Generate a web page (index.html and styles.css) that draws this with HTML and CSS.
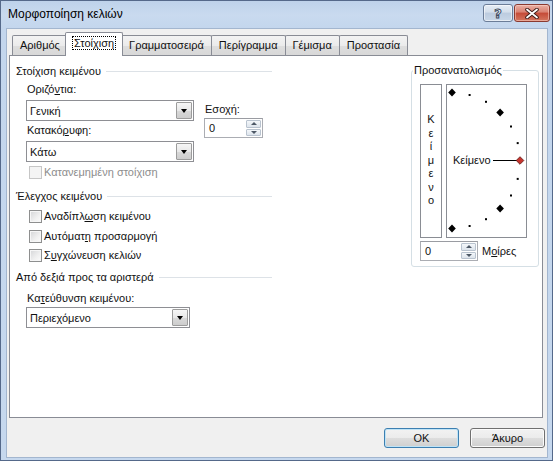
FILE: index.html
```html
<!DOCTYPE html>
<html lang="el">
<head>
<meta charset="utf-8">
<title>Μορφοποίηση κελιών</title>
<link rel="stylesheet" href="styles.css">
</head>
<body>
<div class="window">
  <div class="titlebar">
    <span class="title">Μορφοποίηση κελιών</span>
    <div class="caption-btns">
      <span class="cbtn help">?</span>
      <span class="cbtn close">
        <svg width="14" height="11" viewBox="0 0 14 11"><path d="M2 1.5 L12 9.5 M12 1.5 L2 9.5" stroke="#3b1a16" stroke-width="3.6" stroke-linecap="round"/><path d="M2 1.5 L12 9.5 M12 1.5 L2 9.5" stroke="#fff" stroke-width="1.8" stroke-linecap="round"/></svg>
      </span>
    </div>
  </div>
  <div class="client">
    <div class="tabs">
      <div class="tab">Αριθμός</div>
      <div class="tab active"><span class="focus">Στοίχιση</span></div>
      <div class="tab">Γραμματοσειρά</div>
      <div class="tab">Περίγραμμα</div>
      <div class="tab">Γέμισμα</div>
      <div class="tab">Προστασία</div>
    </div>
    <div class="panel">
      <div class="left">
        <div class="section"><span>Στοίχιση κειμένου</span><i class="rule"></i></div>
        <div class="sub align-grid">
          <div class="col-main">
            <div class="lbl l-horiz">Οριζό<u>ν</u>τια:</div>
            <div class="combo c1"><span class="val">Γενική</span><span class="drop"><i class="tri"></i></span></div>
            <div class="lbl l-vert">Κατακό<u>ρ</u>υφη:</div>
            <div class="combo c2"><span class="val">Κάτω</span><span class="drop"><i class="tri"></i></span></div>
          </div>
          <div class="col-indent">
            <div class="lbl">Εσοχή:</div>
            <div class="spin indent-spin"><span class="val">0</span><span class="arrows"><i class="up"></i><i class="dn"></i></span></div>
          </div>
        </div>
        <div class="check disabled ch-dist"><span class="box"></span><span>Κατανεμημένη στοίχιση</span></div>

        <div class="section s2"><span>Έλεγχος κειμένου</span><i class="rule"></i></div>
        <div class="check ch1"><span class="box"></span><span>Αναδίπλ<u>ω</u>ση κειμένου</span></div>
        <div class="check ch2"><span class="box"></span><span>Αυτόματ<u>η</u> προσαρμογή</span></div>
        <div class="check ch3"><span class="box"></span><span>Σ<u>υ</u>γχώνευση κελιών</span></div>

        <div class="section s3"><span>Από δεξιά προς τα αριστερά</span><i class="rule"></i></div>
        <div class="sub">
          <div class="lbl l-dir">Κα<u>τ</u>εύθυνση κειμένου:</div>
          <div class="combo c3"><span class="val">Περιεχόμενο</span><span class="drop"><i class="tri"></i></span></div>
        </div>
      </div>

      <div class="orient">
        <span class="orient-title">Προσανατολισμός</span>
        <div class="orient-boxes">
          <div class="vtext">
            <span>Κ</span><span>ε</span><span>ί</span><span>μ</span><span>ε</span><span>ν</span><span>ο</span>
          </div>
          <div class="dial">
            <svg class="dial-svg" width="79" height="152" viewBox="0 0 79 152">
              <g fill="#000">
                <path d="M5 3.5 L8.8 7.5 L5 11.5 L1.2 7.5 Z"/>
                <rect x="21.6" y="9" width="2" height="2"/>
                <rect x="38" y="15.8" width="2" height="2"/>
                <path d="M53.1 23.5 L56.9 27.5 L53.1 31.5 L49.3 27.5 Z"/>
                <rect x="63" y="40.5" width="2" height="2"/>
                <rect x="69.7" y="57.1" width="2" height="2"/>
                <rect x="69.7" y="92.9" width="2" height="2"/>
                <rect x="63" y="109.5" width="2" height="2"/>
                <path d="M53.1 119.5 L56.9 123.5 L53.1 127.5 L49.3 123.5 Z"/>
                <rect x="38" y="133.2" width="2" height="2"/>
                <rect x="21.6" y="140" width="2" height="2"/>
                <path d="M5 139.5 L8.8 143.5 L5 147.5 L1.2 143.5 Z"/>
              </g>
              <path d="M46 75.5 H71" stroke="#000" stroke-width="1"/>
              <path d="M73 71.7 L76.8 75.5 L73 79.3 L69.2 75.5 Z" fill="#c8352e" stroke="#5b1410" stroke-width="0.8"/>
            </svg>
            <span class="dial-label">Κείμενο</span>
          </div>
        </div>
        <div class="deg-row">
          <div class="spin deg-spin"><span class="val">0</span><span class="arrows"><i class="up"></i><i class="dn"></i></span></div>
          <span class="deg-lbl">Μ<u>ο</u>ίρες</span>
        </div>
      </div>
    </div>
    <div class="buttons">
      <div class="btn default">OK</div>
      <div class="btn">Άκυρο</div>
    </div>
  </div>
</div>
</body>
</html>
```

FILE: styles.css
```css
html, body {
  margin: 0;
  padding: 0;
  background: #c4d6ec;
}
body {
  font-family: "Liberation Sans", Arial, sans-serif;
  font-size: 11px;
  color: #111;
}
u { text-decoration: underline; text-underline-offset: 1px; }

.window {
  width: 553px;
  height: 461px;
  box-sizing: border-box;
  border: 1px solid #55698a;
  background: linear-gradient(#bed2ea 0px, #c9daef 14px, #c3d6ed 28px, #c6d8ee 100%);
  display: flex;
  flex-direction: column;
  padding: 0 5px 3px 6px;
}

/* title bar */
.titlebar {
  height: 28px;
  display: flex;
  justify-content: space-between;
  align-items: flex-start;
  flex: none;
}
.title {
  font-size: 12px;
  line-height: 15px;
  margin: 6px 0 0 1px;
  color: #000;
}
.caption-btns {
  display: flex;
  margin: 3px -3px 0 0;
}
.cbtn {
  height: 18px;
  box-sizing: border-box;
  border-radius: 3px;
  display: flex;
  align-items: center;
  justify-content: center;
}
.help {
  width: 30px;
  margin-right: 1px;
  border: 1px solid #6b7d98;
  background: linear-gradient(#e6edf6 0%, #d3deeb 45%, #bccbdf 50%, #c9d7e8 100%);
  box-shadow: inset 0 0 0 1px rgba(255,255,255,0.55);
  font-family: "DejaVu Sans", sans-serif;
  font-weight: bold;
  font-size: 13px;
  color: #f4f7fb;
  -webkit-text-stroke: 1px #3d4b61;
}
.close {
  width: 36px;
  border: 1px solid #8a3a30;
  background: linear-gradient(#eab0a4 0%, #d98070 45%, #c54a37 50%, #d4765f 100%);
  box-shadow: inset 0 0 0 1px rgba(255,220,210,0.5);
}

/* client */
.client {
  flex: 1;
  background: #f0f0f0;
  display: flex;
  flex-direction: column;
  padding: 3px 2px 0 2px;
  box-shadow: 0 0 0 1px #a3b6cf;
}

.tabs {
  display: flex;
  align-items: flex-end;
  height: 24px;
  margin: 0 0 -1px 3px;
  position: relative;
  z-index: 1;
}
.tab {
  height: 20px;
  margin-bottom: 1px;
  box-sizing: border-box;
  padding: 0 7px;
  border: 1px solid #898c95;
  border-bottom: none;
  border-radius: 2px 2px 0 0;
  background: linear-gradient(#f3f3f3 0%, #ebebeb 50%, #dedede 51%, #d8d8d8 100%);
  line-height: 19px;
  margin-right: -1px;
  white-space: nowrap;
}
.tab.active {
  height: 24px;
  margin: 0 -1px 0 -2px;
  padding: 0 7px;
  background: #fff;
  position: relative;
  z-index: 2;
  line-height: 20px;
}
.tab.active + .tab { margin-left: -1px; }
.focus {
  outline: 1px dotted #000;
  outline-offset: 0;
  padding: 0 1px;
}

.panel {
  height: 363px;
  box-sizing: border-box;
  border: 1px solid #898c95;
  background: #fff;
  display: flex;
  padding: 8px 0 0 6px;
  margin-right: 2px;
  flex: none;
}

.left { width: 256px; }

.section {
  display: flex;
  align-items: center;
  height: 15px;
  line-height: 15px;
}
.section .rule {
  flex: 1;
  height: 1px;
  background: #dde2e7;
  margin-left: 5px;
}
.s2 { margin-top: 9px; }
.s3 { margin-top: 7px; }

.sub { padding-left: 10px; }
.lbl {
  height: 15px;
  line-height: 15px;
  padding-left: 1px;
  white-space: nowrap;
}
.l-horiz { margin-top: 3px; }
.l-vert { margin-top: 2px; }
.l-dir { margin-top: 6px; }

.align-grid { display: flex; }
.col-indent { margin-left: 10px; padding-top: 23px; }

.combo {
  width: 168px;
  height: 21px;
  box-sizing: border-box;
  border: 1px solid #8e8f94;
  background: #fff;
  display: flex;
  align-items: center;
}
.c1 { margin-top: 3px; }
.c2 { margin-top: 3px; }
.c3 { margin-top: 1px; width: 164px; }
.combo .val { flex: 1; padding-left: 3px; }
.drop {
  width: 16px;
  height: 17px;
  box-sizing: border-box;
  margin-right: 1px;
  border: 1px solid #9c9c9c;
  border-radius: 1px;
  background: linear-gradient(#f6f6f6 0%, #e8e8e8 50%, #d9d9d9 51%, #cdcdcd 100%);
  display: flex;
  align-items: center;
  justify-content: center;
}
.tri {
  width: 0;
  height: 0;
  border-left: 3.5px solid transparent;
  border-right: 3.5px solid transparent;
  border-top: 4px solid #000;
  margin-top: 1px;
}

.spin {
  height: 20px;
  box-sizing: border-box;
  border: 1px solid #abadb3;
  border-top-color: #9a9ca2;
  background: #fff;
  display: flex;
  align-items: stretch;
}
.spin .val { flex: 1; padding-left: 4px; line-height: 18px; }
.arrows {
  width: 15px;
  display: flex;
  flex-direction: column;
  padding: 1px 1px 1px 0;
  gap: 1px;
}
.arrows i {
  flex: 1;
  border: 1px solid #b9c3cf;
  border-radius: 1px;
  background: linear-gradient(#f4f7fa, #dde4ec);
  display: flex;
  align-items: center;
  justify-content: center;
}
.arrows .up::after {
  content: "";
  border-left: 3px solid transparent;
  border-right: 3px solid transparent;
  border-bottom: 3px solid #4d5866;
}
.arrows .dn::after {
  content: "";
  border-left: 3px solid transparent;
  border-right: 3px solid transparent;
  border-top: 3px solid #4d5866;
}
.indent-spin { width: 59px; margin-top: 1px; }

.check {
  display: flex;
  align-items: center;
  height: 15px;
  line-height: 15px;
  padding-left: 13px;
  white-space: nowrap;
}
.check .box {
  width: 13px;
  height: 13px;
  box-sizing: border-box;
  border: 1px solid #8e8f8f;
  background: linear-gradient(135deg, #d4d5d7 0%, #f0f0f0 60%, #fcfcfc 100%);
  box-shadow: inset 0 0 0 1px #f6f6f6;
  margin-right: 2px;
  flex: none;
}
.check.disabled { color: #8d8d8d; }
.check.disabled .box {
  border-color: #c6c6c6;
  background: #f4f4f4;
  box-shadow: none;
}
.ch-dist { margin-top: 3px; }
.ch1 { margin-top: 5px; }
.ch2 { margin-top: 5px; }
.ch3 { margin-top: 4px; }

/* orientation group */
.orient {
  width: 128px;
  height: 197px;
  box-sizing: border-box;
  margin: 6px 3px 0 auto;
  border: 1px solid #d5dfe5;
  border-radius: 3px;
  position: relative;
  padding: 13px 0 0 8px;
}
.orient-title {
  position: absolute;
  top: -8px;
  left: 1px;
  padding: 0 1px;
  background: #fff;
  line-height: 15px;
}
.orient-boxes {
  display: flex;
  gap: 4px;
  height: 154px;
}
.vtext {
  width: 22px;
  box-sizing: border-box;
  border: 1px solid #8a8d94;
  display: flex;
  flex-direction: column;
  align-items: center;
  justify-content: center;
  line-height: 13.5px;
  padding-bottom: 1px;
}
.dial {
  width: 81px;
  box-sizing: border-box;
  border: 1px solid #8a8d94;
  position: relative;
}
.dial-svg { display: block; }
.dial-label {
  position: absolute;
  left: 6px;
  top: 68px;
  line-height: 15px;
}
.deg-row {
  display: flex;
  align-items: center;
  margin-top: 3px;
}
.deg-spin { width: 58px; }
.deg-lbl { margin-left: 4px; }

/* buttons */
.buttons {
  display: flex;
  justify-content: flex-end;
  gap: 11px;
  margin-top: 10px;
}
.btn {
  width: 75px;
  height: 20px;
  box-sizing: border-box;
  border: 1px solid #707070;
  border-radius: 3px;
  background: linear-gradient(#f2f2f2 0%, #ebebeb 50%, #dddddd 51%, #cfcfcf 100%);
  box-shadow: inset 0 0 0 1px #fbfbfb;
  display: flex;
  align-items: center;
  justify-content: center;
}
.btn.default {
  border-color: #3c7fb1;
  box-shadow: inset 0 0 0 1px #bfe3f6;
}
```
